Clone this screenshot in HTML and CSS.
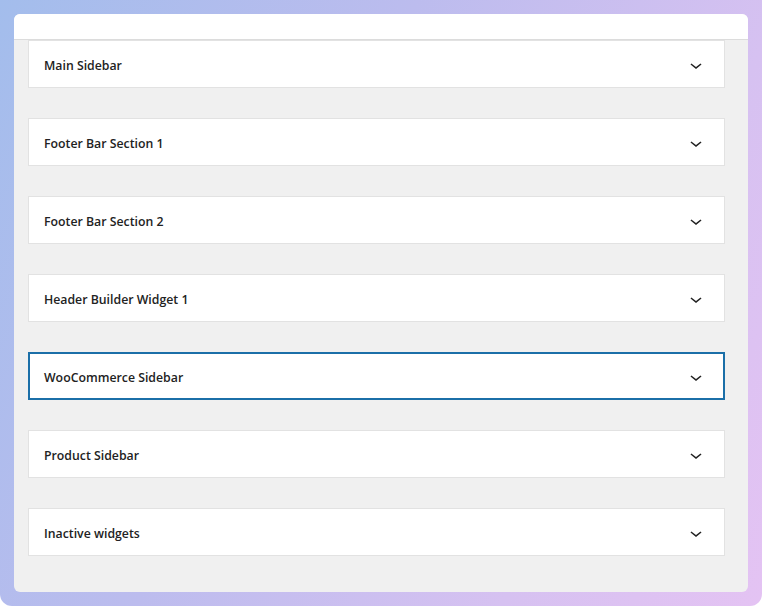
FILE: index.html
```html
<!DOCTYPE html>
<html lang="en">
<head>
<meta charset="utf-8">
<title>Widgets</title>
<link rel="stylesheet" href="styles.css">
</head>
<body>
<div class="frame">
  <div class="panel">
    <div class="topbar"></div>
    <div class="list">
      <div class="area"><span class="title">Main Sidebar</span><svg class="chev" viewBox="0 0 24 24" width="24" height="24"><path d="M17.5 11.6 12 16l-5.5-4.4.9-1.2L12 14l4.5-3.6 1 1.2z"/></svg></div>
      <div class="area"><span class="title">Footer Bar Section 1</span><svg class="chev" viewBox="0 0 24 24" width="24" height="24"><path d="M17.5 11.6 12 16l-5.5-4.4.9-1.2L12 14l4.5-3.6 1 1.2z"/></svg></div>
      <div class="area"><span class="title">Footer Bar Section 2</span><svg class="chev" viewBox="0 0 24 24" width="24" height="24"><path d="M17.5 11.6 12 16l-5.5-4.4.9-1.2L12 14l4.5-3.6 1 1.2z"/></svg></div>
      <div class="area"><span class="title">Header Builder Widget 1</span><svg class="chev" viewBox="0 0 24 24" width="24" height="24"><path d="M17.5 11.6 12 16l-5.5-4.4.9-1.2L12 14l4.5-3.6 1 1.2z"/></svg></div>
      <div class="area focused"><span class="title">WooCommerce Sidebar</span><svg class="chev" viewBox="0 0 24 24" width="24" height="24"><path d="M17.5 11.6 12 16l-5.5-4.4.9-1.2L12 14l4.5-3.6 1 1.2z"/></svg></div>
      <div class="area"><span class="title">Product Sidebar</span><svg class="chev" viewBox="0 0 24 24" width="24" height="24"><path d="M17.5 11.6 12 16l-5.5-4.4.9-1.2L12 14l4.5-3.6 1 1.2z"/></svg></div>
      <div class="area"><span class="title">Inactive widgets</span><svg class="chev" viewBox="0 0 24 24" width="24" height="24"><path d="M17.5 11.6 12 16l-5.5-4.4.9-1.2L12 14l4.5-3.6 1 1.2z"/></svg></div>
    </div>
  </div>
</div>
</body>
</html>
```

FILE: styles.css
```css
html, body {
  margin: 0;
  padding: 0;
  background: #ffffff;
}
.frame {
  width: 762px;
  height: 606px;
  box-sizing: border-box;
  padding: 14px;
  border-radius: 0 0 12px 12px;
  background: linear-gradient(115deg, #a3bdec 0%, #bcbcee 40%, #d6c1f1 75%, #e4c3f3 100%);
}
.panel {
  width: 734px;
  height: 578px;
  background: #f0f0f0;
  border-radius: 6px;
  overflow: hidden;
  display: flex;
  flex-direction: column;
}
.topbar {
  height: 25px;
  background: #ffffff;
  border-bottom: 1px solid #dcdcdc;
  flex: none;
}
.list {
  display: flex;
  flex-direction: column;
  gap: 30px;
  padding: 0 23px 0 14px;
}
.area {
  height: 48px;
  box-sizing: border-box;
  background: #ffffff;
  border: 1px solid #e2e2e2;
  display: flex;
  align-items: center;
  justify-content: space-between;
  padding: 2px 16px 0 15px;
  font-family: "Open Sans", "Noto Sans", sans-serif;
  font-weight: 600;
  font-size: 12.3px;
  color: #222222;
}
.area.focused {
  border: 2px solid #1b6fa8;
  padding: 2px 15px 0 14px;
}
.chev {
  fill: #222222;
  flex: none;
}
```
